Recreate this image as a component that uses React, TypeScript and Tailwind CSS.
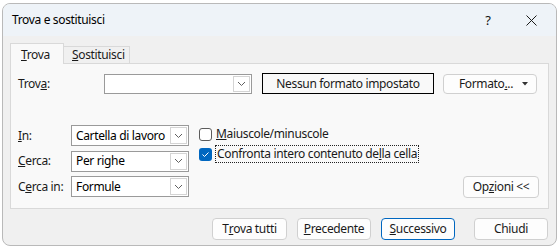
import React from 'react';

function Chevron() {
  return (
    <svg width="9" height="6" viewBox="0 0 9 6" className="block">
      <polyline points="1,1 4.5,4.5 8,1" fill="none" stroke="#606060" strokeWidth="1" />
    </svg>
  );
}

function Combo({ value, width, height = 21 }: { value?: string; width: number; height?: number }) {
  return (
    <div
      className="flex items-stretch bg-white border border-[#9a9a9a]"
      style={{ width, height }}
    >
      <div className="flex-1 flex items-center pl-[4px] text-[#000] whitespace-nowrap overflow-hidden">{value}</div>
      <div className="w-[17px] m-[1px] border border-[#d4d4d4] bg-white flex items-center justify-center">
        <Chevron />
      </div>
    </div>
  );
}

function Btn({
  children,
  width = 74,
  primary = false,
}: {
  children: React.ReactNode;
  width?: number;
  primary?: boolean;
}) {
  return (
    <div
      className={`h-[22px] flex items-center justify-center rounded-[4px] bg-[#fdfdfd] border ${
        primary ? 'border-[#0067c0]' : 'border-[#d0d0d0]'
      }`}
      style={{ width }}
    >
      {children}
    </div>
  );
}

export default function App() {
  return (
    <div className="w-[559px] h-[252px] bg-white pt-[3px] pl-[2px] font-['Segoe_UI','Noto_Sans',sans-serif] text-[12px] tracking-[-0.35px] text-[#1a1a1a] leading-none whitespace-nowrap">
      <div className="w-[555px] h-[243px] border border-[#b9b9b9] rounded-[8px] overflow-hidden bg-[#f0f0f0] flex flex-col">
        {/* title bar */}
        <div className="h-[32px] bg-[#eef3f8] flex items-center pl-[9px] shrink-0">
          <span className="flex-1 text-[#000]">Trova e sostituisci</span>
          <span className="w-[40px] text-center text-[13px] text-[#111]">?</span>
          <div className="w-[48px] flex justify-center pr-[2px]">
            <svg width="11" height="11" viewBox="0 0 11 11">
              <path d="M0.5 0.5 L10.5 10.5 M10.5 0.5 L0.5 10.5" stroke="#1a1a1a" strokeWidth="1" />
            </svg>
          </div>
        </div>

        <div className="px-[7px] pt-[7px] flex flex-col">
          {/* tabs */}
          <div className="flex items-end h-[20px]">
            <div className="w-[54px] h-[21px] -mb-px relative z-10 bg-[#f9f9f9] border-t border-l border-r border-[#d9d9d9] flex items-center pl-[10px] pt-[1px]">
              <span><u>T</u>rova</span>
            </div>
            <div className="w-[66px] h-[17px] bg-[#f0f0f0] border-t border-r border-[#d9d9d9] flex items-center pl-[8px]">
              <span><u>S</u>ostituisci</span>
            </div>
          </div>

          {/* panel */}
          <div className="h-[146px] bg-[#f9f9f9] border border-[#d9d9d9] pt-[9px] pl-[7px] pr-[9px] flex flex-col">
            <div className="flex items-center h-[21px]">
              <div className="w-[86px]">Trov<u>a</u>:</div>
              <Combo width={148} height={20} />
              <div className="ml-[10px] w-[172px] h-[21px] border border-black flex items-center justify-center">
                Nessun formato impostato
              </div>
              <div className="ml-[9px] w-[94px] h-[20px] rounded-[4px] border border-[#d0d0d0] bg-[#fdfdfd] flex items-center">
                <span className="flex-1 text-center pl-[6px]">
                  Formato<u>.</u>..
                </span>
                <svg width="6" height="4" viewBox="0 0 6 4" className="mr-[8px]">
                  <polygon points="0,0 6,0 3,3.5" fill="#333" />
                </svg>
              </div>
            </div>

            <div className="flex mt-[31px] flex-1 pb-[10px]">
              <div className="grid grid-cols-[53px_118px] gap-y-[4.5px] auto-rows-[21px] items-center">
                <div><u>I</u>n:</div>
                <Combo value="Cartella di lavoro" width={118} />
                <div><u>C</u>erca:</div>
                <Combo value="Per righe" width={118} />
                <div>C<u>e</u>rca in:</div>
                <Combo value="Formule" width={118} />
              </div>

              <div className="ml-[10px] flex flex-col -mt-[1px]">
                <div className="h-[20px] flex items-center">
                  <div className="w-[13px] h-[13px] rounded-[3px] border border-[#5c5c5c] bg-white" />
                  <span className="ml-[4px]">
                    <u>M</u>aiuscole/minuscole
                  </span>
                </div>
                <div className="h-[20px] flex items-center">
                  <div className="w-[13px] h-[13px] rounded-[3px] bg-[#0067c0] flex items-center justify-center">
                    <svg width="9" height="7" viewBox="0 0 9 7">
                      <polyline points="1.5,3.5 3.5,5.5 7.5,1.5" fill="none" stroke="#fff" strokeWidth="1" />
                    </svg>
                  </div>
                  <span className="ml-[3px] px-[1px] py-[2px] border border-dotted border-[#222]">
                    Confronta intero contenuto de<u>l</u>la cella
                  </span>
                </div>
              </div>

              <div className="flex-1" />
              <div className="self-end">
                <Btn width={76}>
                  Op<u>z</u>ioni &lt;&lt;
                </Btn>
              </div>
            </div>
          </div>

          {/* bottom buttons */}
          <div className="flex justify-end mt-[9px] pr-[1px]">
            <Btn width={75}>
              T<u>r</u>ova tutti
            </Btn>
            <div className="ml-[10px]">
              <Btn>
                <u>P</u>recedente
              </Btn>
            </div>
            <div className="ml-[10px]">
              <Btn primary>
                <u>S</u>uccessivo
              </Btn>
            </div>
            <div className="ml-[19px]">
              <Btn>Chiudi</Btn>
            </div>
          </div>
        </div>
      </div>
    </div>
  );
}
